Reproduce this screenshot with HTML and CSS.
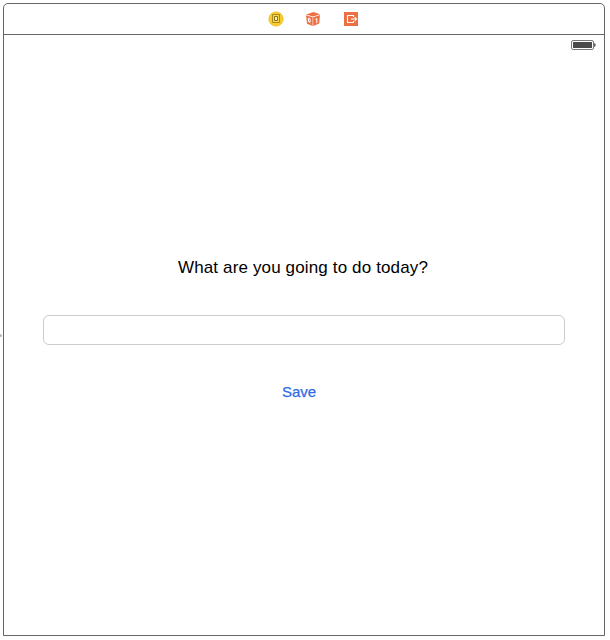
FILE: index.html
```html
<!DOCTYPE html>
<html lang="en">
<head>
<meta charset="utf-8">
<title>Today</title>
<link rel="stylesheet" href="styles.css">
</head>
<body>
<span class="segue-tip"></span>
<main class="scene">
  <header class="dock">
    <svg class="icon" width="16" height="16" viewBox="0 0 16 16">
      <circle cx="8" cy="8" r="7.1" fill="#f8cc2c" stroke="#e9b820" stroke-width=".8"/>
      <path d="M4.5 3.5h7v8h-7z" fill="#f9d748" stroke="#a88a20"/>
      <path d="M6.5 5.5h3v4h-3z" fill="#fdf0a8" stroke="#8c731c"/>
    </svg>
    <svg class="icon" width="16" height="16" viewBox="0 0 16 16">
      <path d="M8.5 1 15 3.3 8 5.6 1 3.6z" fill="#ed7044"/>
      <path d="M1 4.3 7.6 6.2V15L2 12.7z" fill="#ed7044"/>
      <path d="M8.2 6.2 15 4 14.2 12.5 8.2 15z" fill="#ed7044"/>
      <path d="M3.3 7.2l1.8.6v3.5l-1.5-.5zM10.4 8.4l1.4-.8v4.6" fill="none" stroke="#fff" stroke-width="1"/>
    </svg>
    <svg class="icon" width="16" height="16" viewBox="0 0 16 16">
      <path d="M1 1h14v14H1z" fill="#ed7044"/>
      <path d="M10.5 6V4.5h-6v7h6V10M8 8h5.5M11.8 6 13.5 8 11.8 10" fill="none" stroke="#fff" stroke-width="1.1"/>
    </svg>
  </header>
  <div class="status">
    <svg width="26" height="10" viewBox="0 0 26 10">
      <rect x=".5" y=".5" width="22" height="9" rx="1.6" fill="#fff" stroke="#777"/>
      <path d="M2 2h19v6H2z" fill="#4b4b4b"/>
      <path d="M23 3q1.8.3 1.8 2T23 7z" fill="#666"/>
    </svg>
  </div>
  <section class="form">
    <label class="question" for="task">What are you going to do today?</label>
    <input class="field" id="task" type="text">
    <button class="save" type="button">Save</button>
  </section>
</main>
</body>
</html>
```
FILE: styles.css
```css
* { box-sizing: border-box; }
body {
  margin: 0;
  padding: 3px;
  background: #fff;
  font-family: "Liberation Sans", Arial, sans-serif;
  overflow: hidden;
}
.scene {
  width: 602px;
  height: 633px;
  border: 1px solid #666;
  border-radius: 5px 5px 0 0;
  background: #fff;
}
.dock {
  display: flex;
  justify-content: center;
  align-items: center;
  gap: 21.5px;
  height: 31px;
  padding-left: 18px;
  border-bottom: 1px solid #666;
}
.icon { display: block; flex: none; }
.status {
  display: flex;
  justify-content: flex-end;
  height: 20px;
  padding: 5px 7px 0 0;
}
.form {
  display: flex;
  flex-direction: column;
  align-items: center;
  padding: 202px 39px 0;
}
.question {
  height: 22px;
  line-height: 22px;
  font-size: 17px;
  letter-spacing: 0.14px;
  color: #000;
  white-space: nowrap;
  margin-right: 2px;
}
.field {
  width: 522px;
  height: 30px;
  margin: 36px 0 0;
  padding: 0 7px;
  border: 1px solid #ccc;
  border-radius: 6px;
  background: #fff;
  font: inherit;
  outline: none;
}
.save {
  height: 22px;
  margin: 36px 10px 0 0;
  padding: 0;
  border: 0;
  background: none;
  color: #2f6be6;
  font: 15px/22px "Liberation Sans", Arial, sans-serif;
  -webkit-text-stroke: 0.25px #2f6be6;
}
.segue-tip {
  position: absolute;
  left: 0;
  top: 334px;
  width: 2px;
  height: 3px;
  background: #bbb;
  border-radius: 0 2px 2px 0;
}
```
